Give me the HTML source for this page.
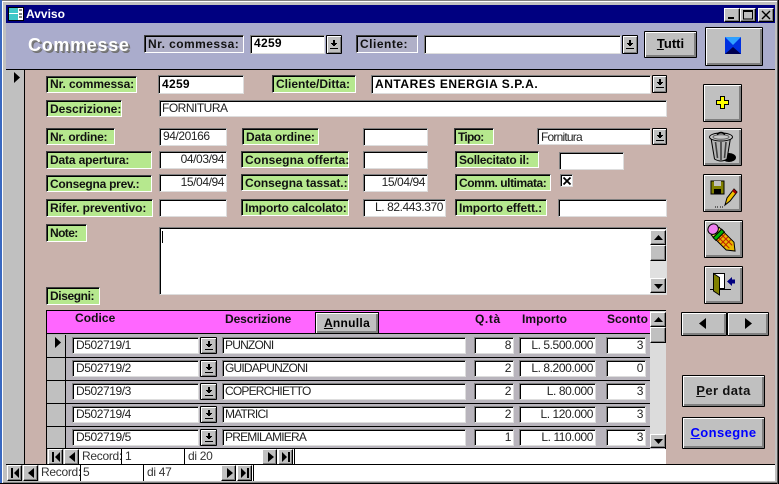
<!DOCTYPE html>
<html><head><meta charset="utf-8"><style>
html,body{margin:0;padding:0}
body{width:779px;height:484px;overflow:hidden;position:relative;background:#c0c0c0;font-family:"Liberation Sans",sans-serif;font-size:12px;color:#000}
div{position:absolute;box-sizing:border-box;white-space:nowrap}
.l{background:#b6e88e;border:1px solid;border-color:#404040 #fff #fff #404040;box-shadow:inset 1px 1px 0 #000;font-weight:bold;padding-left:3px;line-height:16px;font-size:12px;color:#111}
.i{background:#fff;border:1px solid;border-color:#808080 #ddd #ddd #808080;box-shadow:inset 1px 1px 0 #000;padding:0 2px 0 3px;line-height:15px;font-size:12px;color:#222;overflow:hidden;letter-spacing:-.42px}
.c{letter-spacing:-.8px;padding-left:2px}
.r{text-align:right}
.B{font-weight:bold;color:#000;letter-spacing:.3px}
.d{background:#c0c0c0;border:1px solid #000;border-radius:1px;box-shadow:inset 1px 1px 0 #fff,inset -1px -1px 0 #808080}
.d:after{content:"";position:absolute;left:50%;top:50%;margin:-5px 0 0 -3px;width:6px;height:6px;background:linear-gradient(#000,#000) 2px 0/2px 3px no-repeat,linear-gradient(#000,#000) 0 3px/6px 1px no-repeat,linear-gradient(#000,#000) 1px 4px/4px 1px no-repeat,linear-gradient(#000,#000) 2px 5px/2px 1px no-repeat}
.d:before{content:"";position:absolute;left:50%;top:50%;margin:3px 0 0 -4px;width:8px;height:1px;background:#000}
.b{background:#c0c0c0;border:1px solid #000;border-radius:1px;box-shadow:inset 1px 1px 0 #fff,inset -2px -2px 0 #808080;text-align:center;font-weight:bold}
.s{background:#c0c0c0;border:1px solid #000;border-top-color:#fff;border-left-color:#fff;box-shadow:inset -1px -1px 0 #808080}
.h{font-weight:bold;color:#111;letter-spacing:.05px;font-size:12px;line-height:14px}
.n{background:#c0c0c0;border:1px solid #000;border-top-color:#fff;border-left-color:#fff;box-shadow:inset -1px -1px 0 #808080;width:15px;height:16px}
.t{font-size:12px;color:#333;line-height:16px;letter-spacing:-.3px}
svg{position:absolute;overflow:visible}
</style></head><body>
<!-- window chrome -->
<div style="left:0;top:0;width:2px;height:484px;background:#3a68c0"></div>
<div style="left:2px;top:0;width:777px;height:1px;background:#808080"></div>
<div style="left:2px;top:1px;width:777px;height:1px;background:#fff"></div>
<div style="left:2px;top:1px;width:1px;height:483px;background:#fff"></div>
<div style="left:6px;top:5px;width:769px;height:18px;background:#000080"></div>
<svg style="left:8px;top:7px" width="16" height="14"><rect width="16" height="14" fill="#000"/><rect x="1" y="1" width="14" height="12" fill="#fff"/><rect x="1" y="1" width="9" height="5" fill="#40c8c8"/><rect x="1" y="7" width="9" height="6" fill="#40c8c8"/><path d="M11 3h3M11 7h3M11 10h3" stroke="#000"/></svg>
<div style="left:26px;top:5px;height:18px;line-height:18px;color:#fff;font-weight:bold;font-size:12px">Avviso</div>
<div class="s" style="left:724px;top:8px;width:16px;height:14px"><svg style="left:3px;top:8px" width="8" height="2"><rect width="6" height="2"/></svg></div>
<div class="s" style="left:740px;top:8px;width:16px;height:14px"><svg style="left:2px;top:1px" width="10" height="10"><rect x=".5" y="1" width="9" height="8" fill="none" stroke="#000"/><rect x="0" y="0" width="10" height="2"/></svg></div>
<div class="s" style="left:758px;top:8px;width:16px;height:14px"><svg style="left:3px;top:2px" width="9" height="8"><path d="M0 0L8 8M8 0L0 8" stroke="#000" stroke-width="1.4"/></svg></div>
<!-- top band -->
<div style="left:6px;top:23px;width:769px;height:46px;background:#aaaccc"></div>
<div style="left:6px;top:69px;width:769px;height:1px;background:#000"></div>
<div style="left:6px;top:70px;width:18px;height:394px;background:#c0c0c0"></div>
<div style="left:24px;top:70px;width:1px;height:394px;background:#000"></div>
<div style="left:25px;top:70px;width:750px;height:394px;background:#c9b2ac"></div>
<svg style="left:13px;top:72px" width="8" height="12"><path d="M1 0L7 5.5L1 11Z"/></svg>
<div style="left:28px;top:33px;font-size:18px;line-height:24px;font-weight:bold;color:#fff;letter-spacing:.7px;text-shadow:1px 1px 0 #808080,2px 2px 0 #707070">Commesse</div>
<div class="l" style="left:144px;top:35px;width:100px;height:18px;background:#b0b0c8;letter-spacing:.45px">Nr. commessa:</div>
<div class="i" style="left:250px;top:35px;width:75px;height:19px"><span class="B">4259</span></div>
<div class="d" style="left:326px;top:35px;width:16px;height:19px"></div>
<div class="l" style="left:356px;top:35px;width:62px;height:18px;background:#b0b0c8;letter-spacing:.5px">Cliente:</div>
<div class="i" style="left:424px;top:35px;width:197px;height:19px"></div>
<div class="d" style="left:622px;top:35px;width:16px;height:19px"></div>
<div class="b" style="left:644px;top:31px;width:53px;height:27px;line-height:24px;font-size:13px"><u>T</u>utti</div>
<div class="b" style="left:705px;top:27px;width:58px;height:39px"><svg style="left:19px;top:9px" width="17" height="18"><path d="M0 0H16V17H0Z" fill="#0030e0"/><path d="M0 0H16L8 8Z" fill="#30a0ff"/><path d="M0 17H16L8 10Z" fill="#000050"/></svg></div>
<!-- form -->
<div class="l" style="left:46px;top:76px;width:91px;height:17px;line-height:15px;letter-spacing:-.1px">Nr. commessa:</div>
<div class="i" style="left:158px;top:75px;width:86px;height:19px;line-height:16px"><span class="B">4259</span></div>
<div class="l" style="left:272px;top:75px;width:84px;height:18px">Cliente/Ditta:</div>
<div class="i" style="left:371px;top:75px;width:280px;height:19px;line-height:16px"><span class="B" style="letter-spacing:.55px">ANTARES ENERGIA S.P.A.</span></div>
<div class="d" style="left:652px;top:75px;width:15px;height:18px"></div>
<div class="l" style="left:46px;top:100px;width:76px;height:17px">Descrizione:</div>
<div class="i c" style="left:159px;top:100px;width:508px;height:17px;letter-spacing:-.5px">FORNITURA</div>
<div class="l" style="left:46px;top:128px;width:69px;height:17px;letter-spacing:-.25px">Nr. ordine:</div>
<div class="i" style="left:159px;top:128px;width:68px;height:18px">94/20166</div>
<div class="l" style="left:242px;top:128px;width:77px;height:17px;letter-spacing:-.1px">Data ordine:</div>
<div class="i" style="left:363px;top:128px;width:65px;height:18px"></div>
<div class="l" style="left:454px;top:128px;width:40px;height:17px;letter-spacing:-.7px">Tipo:</div>
<div class="i" style="left:537px;top:128px;width:114px;height:17px;line-height:16px;letter-spacing:-.8px">Fornitura</div>
<div class="d" style="left:652px;top:128px;width:15px;height:17px"></div>
<div class="l" style="left:46px;top:151px;width:106px;height:18px;letter-spacing:-.15px">Data apertura:</div>
<div class="i r" style="left:159px;top:151px;width:68px;height:18px">04/03/94</div>
<div class="l" style="left:241px;top:151px;width:108px;height:17px;letter-spacing:.1px">Consegna offerta:</div>
<div class="i" style="left:363px;top:151px;width:65px;height:18px"></div>
<div class="l" style="left:455px;top:151px;width:84px;height:17px;letter-spacing:-.3px">Sollecitato il:</div>
<div class="i" style="left:559px;top:152px;width:65px;height:18px"></div>
<div class="l" style="left:46px;top:175px;width:106px;height:17px;letter-spacing:-.25px">Consegna prev.:</div>
<div class="i r" style="left:159px;top:174px;width:68px;height:18px">15/04/94</div>
<div class="l" style="left:241px;top:174px;width:108px;height:17px;letter-spacing:-.05px">Consegna tassat.:</div>
<div class="i r" style="left:363px;top:174px;width:65px;height:18px">15/04/94</div>
<div class="l" style="left:455px;top:174px;width:96px;height:17px;letter-spacing:-.45px">Comm. ultimata:</div>
<div class="i" style="left:560px;top:174px;width:13px;height:13px;padding:0"><svg style="left:2px;top:2px" width="8" height="8"><path d="M.5 .5L7.5 7.5M7.5 .5L.5 7.5" stroke="#000" stroke-width="1.8"/></svg></div>
<div class="l" style="left:46px;top:199px;width:107px;height:18px;letter-spacing:-.1px">Rifer. preventivo:</div>
<div class="i" style="left:159px;top:199px;width:68px;height:18px"></div>
<div class="l" style="left:241px;top:199px;width:108px;height:17px;letter-spacing:-.13px">Importo calcolato:</div>
<div class="i r" style="left:363px;top:199px;width:83px;height:18px">L. 82.443.370</div>
<div class="l" style="left:455px;top:199px;width:92px;height:17px;letter-spacing:-.1px">Importo effett.:</div>
<div class="i" style="left:558px;top:199px;width:109px;height:18px"></div>
<div class="l" style="left:46px;top:224px;width:41px;height:18px;letter-spacing:-.6px">Note:</div>
<div class="i" style="left:159px;top:227px;width:508px;height:68px"></div>
<div style="left:162px;top:231px;width:1px;height:12px;background:#000"></div>
<div style="left:650px;top:229px;width:16px;height:65px;background:#e0e0e0"></div>
<div class="s" style="left:650px;top:230px;width:16px;height:15px"><svg style="left:3px;top:4px" width="9" height="6"><path d="M4.5 0L9 5H0Z"/></svg></div>
<div class="s" style="left:650px;top:245px;width:16px;height:16px"></div>
<div class="s" style="left:650px;top:278px;width:16px;height:15px"><svg style="left:3px;top:5px" width="9" height="6"><path d="M0 0H9L4.5 5Z"/></svg></div>
<div class="l" style="left:46px;top:287px;width:54px;height:18px;letter-spacing:-.4px">Disegni:</div>
<!-- subform -->
<div style="left:46px;top:310px;width:620px;height:154px;background:#b8b4bc;border:1px solid #000;border-bottom:0"></div>
<div style="left:47px;top:311px;width:603px;height:23px;background:#ff66ff;border-bottom:1px solid #000"></div>
<div class="h" style="left:75px;top:311px">Codice</div>
<div class="h" style="left:225px;top:312px;letter-spacing:-.1px">Descrizione</div>
<div class="b" style="left:315px;top:312px;width:64px;height:22px;border-radius:0;line-height:20px;font-size:12px;letter-spacing:.3px"><u>A</u>nnulla</div>
<div class="h" style="left:475px;top:312px;letter-spacing:.6px">Q.tà</div>
<div class="h" style="left:522px;top:312px">Importo</div>
<div class="h" style="left:607px;top:312px">Sconto</div>
<!-- rows -->
<div style="left:47px;top:357px;width:603px;height:1px;background:#000"></div>
<div style="left:47px;top:380px;width:603px;height:1px;background:#000"></div>
<div style="left:47px;top:403px;width:603px;height:1px;background:#000"></div>
<div style="left:47px;top:426px;width:603px;height:1px;background:#000"></div>
<div style="left:47px;top:448px;width:603px;height:1px;background:#000"></div>
<div style="left:65px;top:335px;width:1px;height:113px;background:#000"></div>
<div style="left:47px;top:335px;width:18px;height:22px;background:#c0c0c0"></div>
<div style="left:47px;top:358px;width:18px;height:22px;background:#c0c0c0"></div>
<div style="left:47px;top:381px;width:18px;height:22px;background:#c0c0c0"></div>
<div style="left:47px;top:404px;width:18px;height:22px;background:#c0c0c0"></div>
<div style="left:47px;top:427px;width:18px;height:21px;background:#c0c0c0"></div>
<svg style="left:54px;top:337px" width="8" height="12"><path d="M1 0L7 5.5L1 11Z"/></svg>

<div class="i" style="left:72px;top:337px;width:127px;height:17px">D502719/1</div><div class="d" style="left:200px;top:337px;width:17px;height:17px"></div><div class="i c" style="left:222px;top:337px;width:244px;height:17px">PUNZONI</div><div class="i r" style="left:474px;top:337px;width:40px;height:17px">8</div><div class="i r" style="left:519px;top:337px;width:77px;height:17px">L. 5.500.000</div><div class="i r" style="left:606px;top:337px;width:40px;height:17px">3</div>
<div class="i" style="left:72px;top:360px;width:127px;height:17px">D502719/2</div><div class="d" style="left:200px;top:360px;width:17px;height:17px"></div><div class="i c" style="left:222px;top:360px;width:244px;height:17px">GUIDAPUNZONI</div><div class="i r" style="left:474px;top:360px;width:40px;height:17px">2</div><div class="i r" style="left:519px;top:360px;width:77px;height:17px">L. 8.200.000</div><div class="i r" style="left:606px;top:360px;width:40px;height:17px">0</div>
<div class="i" style="left:72px;top:383px;width:127px;height:17px">D502719/3</div><div class="d" style="left:200px;top:383px;width:17px;height:17px"></div><div class="i c" style="left:222px;top:383px;width:244px;height:17px">COPERCHIETTO</div><div class="i r" style="left:474px;top:383px;width:40px;height:17px">2</div><div class="i r" style="left:519px;top:383px;width:77px;height:17px">L. 80.000</div><div class="i r" style="left:606px;top:383px;width:40px;height:17px">3</div>
<div class="i" style="left:72px;top:406px;width:127px;height:17px">D502719/4</div><div class="d" style="left:200px;top:406px;width:17px;height:17px"></div><div class="i c" style="left:222px;top:406px;width:244px;height:17px">MATRICI</div><div class="i r" style="left:474px;top:406px;width:40px;height:17px">2</div><div class="i r" style="left:519px;top:406px;width:77px;height:17px">L. 120.000</div><div class="i r" style="left:606px;top:406px;width:40px;height:17px">3</div>
<div class="i" style="left:72px;top:429px;width:127px;height:17px">D502719/5</div><div class="d" style="left:200px;top:429px;width:17px;height:17px"></div><div class="i c" style="left:222px;top:429px;width:244px;height:17px">PREMILAMIERA</div><div class="i r" style="left:474px;top:429px;width:40px;height:17px">1</div><div class="i r" style="left:519px;top:429px;width:77px;height:17px">L. 110.000</div><div class="i r" style="left:606px;top:429px;width:40px;height:17px">3</div>
<!-- subform scrollbar -->
<div style="left:650px;top:311px;width:16px;height:137px;background:#dcdcdc"></div>
<div class="s" style="left:650px;top:312px;width:16px;height:15px"><svg style="left:3px;top:4px" width="9" height="6"><path d="M4.5 0L9 5H0Z"/></svg></div>
<div class="s" style="left:650px;top:327px;width:16px;height:16px"></div>
<div class="s" style="left:650px;top:434px;width:16px;height:14px"><svg style="left:3px;top:4px" width="9" height="6"><path d="M0 0H9L4.5 5Z"/></svg></div>
<!-- subform nav -->
<div style="left:47px;top:449px;width:619px;height:15px;background:#fff"></div>
<div style="left:47px;top:449px;width:32px;height:15px;background:#c0c0c0"></div>
<div class="n" style="left:48px;top:449px"><svg style="left:3px;top:2px" width="8" height="10"><path d="M0 0H2V10H0ZM8 0V10L3 5Z"/></svg></div>
<div class="n" style="left:64px;top:449px"><svg style="left:3px;top:2px" width="8" height="10"><path d="M7 0V10L1 5Z"/></svg></div>
<div class="t" style="left:82px;top:448px;width:40px">Record:</div>
<div style="left:121px;top:449px;width:1px;height:15px;background:#000"></div>
<div class="t" style="left:125px;top:448px">1</div>
<div style="left:184px;top:449px;width:1px;height:15px;background:#000"></div>
<div class="t" style="left:188px;top:448px">di 20</div>
<div class="n" style="left:262px;top:449px"><svg style="left:4px;top:2px" width="8" height="10"><path d="M1 0V10L7 5Z"/></svg></div>
<div class="n" style="left:278px;top:449px"><svg style="left:3px;top:2px" width="8" height="10"><path d="M0 0V10L5 5ZM6 0H8V10H6Z"/></svg></div>
<div style="left:294px;top:449px;width:1px;height:15px;background:#000"></div>
<!-- main nav -->
<div style="left:6px;top:464px;width:769px;height:1px;background:#000"></div>
<div style="left:6px;top:465px;width:769px;height:16px;background:#fff"></div>
<div style="left:6px;top:465px;width:33px;height:16px;background:#c0c0c0"></div>
<div class="n" style="left:7px;top:465px"><svg style="left:3px;top:2px" width="8" height="10"><path d="M0 0H2V10H0ZM8 0V10L3 5Z"/></svg></div>
<div class="n" style="left:23px;top:465px"><svg style="left:3px;top:2px" width="8" height="10"><path d="M7 0V10L1 5Z"/></svg></div>
<div class="t" style="left:41px;top:464px">Record:</div>
<div style="left:80px;top:465px;width:1px;height:16px;background:#000"></div>
<div class="t" style="left:83px;top:464px">5</div>
<div style="left:143px;top:465px;width:1px;height:16px;background:#000"></div>
<div class="t" style="left:147px;top:464px">di 47</div>
<div class="n" style="left:221px;top:465px"><svg style="left:4px;top:2px" width="8" height="10"><path d="M1 0V10L7 5Z"/></svg></div>
<div class="n" style="left:237px;top:465px"><svg style="left:3px;top:2px" width="8" height="10"><path d="M0 0V10L5 5ZM6 0H8V10H6Z"/></svg></div>
<div style="left:253px;top:465px;width:1px;height:16px;background:#000"></div>
<div style="left:3px;top:482px;width:776px;height:1px;background:#808080"></div>
<div style="left:0;top:483px;width:779px;height:1px;background:#000"></div>
<div style="left:777px;top:0;width:1px;height:484px;background:#555"></div>
<div style="left:778px;top:0;width:1px;height:484px;background:#000"></div>
<!-- right buttons -->
<div class="b" style="left:703px;top:84px;width:39px;height:38px"><svg style="left:12px;top:11px" width="13" height="13"><path d="M4.5 .5H8.5V4.5H12.5V8.5H8.5V12.5H4.5V8.5H.5V4.5H4.5Z" fill="#ff0" stroke="#000"/></svg></div>
<div class="b" style="left:703px;top:128px;width:39px;height:38px"><svg style="left:-1px;top:-1px" width="39" height="38"><ellipse cx="26" cy="29.500" rx="7" ry="4.500"/><path d="M8 10L11.500 31Q18 35 24 31L27.500 10Z" fill="#b4b4b4" stroke="#000"/><path d="M12.500 14L14.500 30M18 14V32M23 14L21.500 30" stroke="#404040" stroke-width="1.600"/><ellipse cx="18" cy="9" rx="11.500" ry="4" fill="#c8c8c8" stroke="#000"/><ellipse cx="18" cy="9" rx="8" ry="2.300" fill="none" stroke="#606060"/><path d="M14 6.500Q18 2.500 22 6.500" fill="none" stroke="#000" stroke-width="1.600"/></svg></div>
<div class="b" style="left:703px;top:174px;width:39px;height:38px"><svg style="left:6px;top:5px" width="28" height="29"><path d="M1 1H14V14H1Z" fill="#808000" stroke="#000"/><rect x="4" y="1" width="7" height="5" fill="#c0c0c0"/><rect x="4" y="9" width="7" height="5" fill="#000"/><path d="M15 25L17 18L24 9L27 12L20 21Z" fill="#f0c000" stroke="#000"/><path d="M23 10L26 13" stroke="#a00000" stroke-width="2.500"/><path d="M5 27H8M10 27H13" stroke="#000" stroke-dasharray="1 1"/></svg></div>
<div class="b" style="left:704px;top:220px;width:39px;height:38px"><svg style="left:-1px;top:-1px" width="39" height="38"><g transform="translate(7 7) rotate(45)"><path d="M13 -5.500H27L34 0L27 5.500H13Z" fill="#e8b800" stroke="#000"/><path d="M15 -5V5M19 -5V5M23 -5V5M13 -2H28M13 2H28" stroke="#c02000"/><rect x="9" y="-6" width="4" height="12" fill="#00b000" stroke="#000"/><rect x="6" y="-5.500" width="3" height="11" fill="#e0e040" stroke="#000"/><ellipse cx="3" cy="0" rx="5" ry="5.500" fill="#f080f0" stroke="#000"/></g></svg></div>
<div class="b" style="left:704px;top:266px;width:39px;height:38px"><svg style="left:-1px;top:-1px" width="39" height="38"><path d="M9.500 7.500H20.500V22.500H9.500Z" fill="#fff" stroke="#000"/><path d="M9.500 7.500L15.500 11.500V29L9.500 25Z" fill="#808000" stroke="#000"/><path d="M6 23.500H9M16 23.500H27" stroke="#000"/><path d="M23 15.500L28 11V13.500H31V17.500H28V20Z" fill="#000080"/></svg></div>
<div class="b" style="left:681px;top:312px;width:46px;height:24px"><svg style="left:16px;top:5px" width="9" height="12"><path d="M8 0V11L1 5.500Z"/></svg></div>
<div class="b" style="left:727px;top:312px;width:42px;height:24px"><svg style="left:16px;top:5px" width="9" height="12"><path d="M1 0V11L8 5.500Z"/></svg></div>
<div class="b" style="left:682px;top:375px;width:83px;height:32px;line-height:29px;font-size:13px;letter-spacing:.4px;color:#111"><u>P</u>er data</div>
<div class="b" style="left:682px;top:417px;width:83px;height:32px;line-height:29px;font-size:13px;letter-spacing:.4px;color:#0000ff"><u>C</u>onsegne</div>
</body></html>
